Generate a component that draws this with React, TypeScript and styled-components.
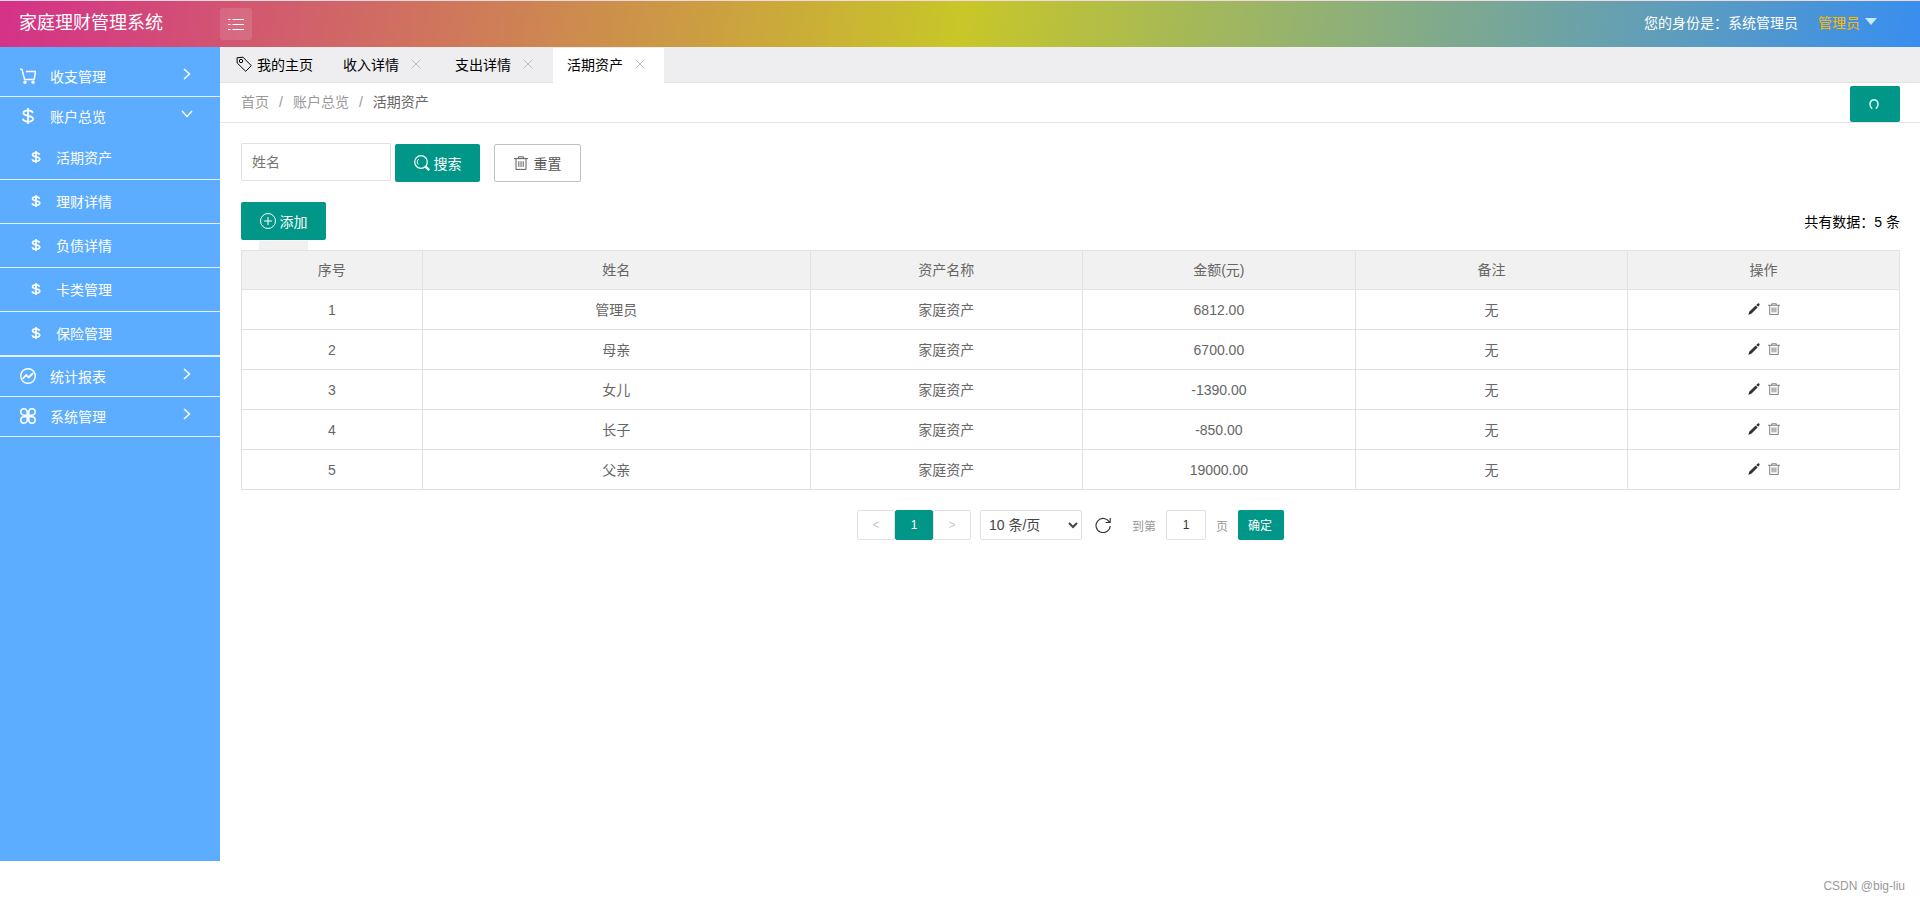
import React, { useState } from "react";
import styled, { createGlobalStyle } from "styled-components";

const GlobalStyle = createGlobalStyle`
  * { box-sizing: border-box; }
  body { margin: 0; background: #fff; }
  body, button, input, select {
    font-family: "Liberation Sans", "Noto Sans CJK SC", sans-serif;
    font-size: 14px;
  }
  a { color: inherit; text-decoration: none; }
  button { cursor: pointer; }
  svg { display: block; flex: none; }
`;

const Page = styled.div`
  min-height: 100vh;
  display: flex;
  flex-direction: column;
`;

const Header = styled.header`
  height: 47px;
  flex: none;
  display: flex;
  align-items: center;
  border-top: 1px solid #f4d9e2;
  background: linear-gradient(100deg, #d53189 0%, #c8c628 50%, #388ef0 100%);
  color: #fff;
`;

const Brand = styled.h1`
  width: 220px;
  margin: 0;
  padding: 0 0 2px 19px;
  font-size: 18px;
  font-weight: 400;
  line-height: 24px;
`;

const CollapseButton = styled.button`
  width: 32px;
  height: 32px;
  padding: 0;
  border: 0;
  border-radius: 3px;
  display: flex;
  align-items: center;
  justify-content: center;
  background: rgba(255, 255, 255, 0.12);
  color: #fff;
`;

const Account = styled.div`
  margin-left: auto;
  padding: 0 43px 2px 0;
  display: flex;
  align-items: center;
  gap: 20px;
  line-height: 20px;
`;

const UserMenu = styled.a`
  display: flex;
  align-items: center;
  gap: 5px;
  color: #ffb800;
`;

const Caret = styled.span`
  border: 6px solid transparent;
  border-top: 7px solid #c4ecfb;
  border-bottom: 0;
  margin-bottom: 4px;
`;

const Body = styled.div`
  flex: 1;
  display: flex;
`;

const Sidebar = styled.nav`
  width: 220px;
  flex: none;
  margin-bottom: 41px;
  padding-top: 10px;
  background: #5cadff;
  color: #fff;
`;

const MenuList = styled.ul`
  margin: 0;
  padding: 0;
  list-style: none;
`;

const MenuGroup = styled.li`
  border-bottom: 1px solid #e3f1ff;
`;

const MenuLink = styled.a`
  height: 39px;
  padding: 0 27px 2px 20px;
  display: flex;
  align-items: center;
  gap: 14px;
`;

const MenuLabel = styled.span`
  flex: 1;
`;

const SubLink = styled.a`
  height: 44px;
  padding: 0 0 2px 30px;
  display: flex;
  align-items: center;
  gap: 14px;
  border-bottom: 1px solid #e3f1ff;
`;

const Main = styled.main`
  flex: 1;
  min-width: 0;
`;

const TabBar = styled.div`
  height: 36px;
  display: flex;
  align-items: flex-end;
  gap: 1px;
  border-bottom: 1px solid #e2e2e2;
  background: #eeeef0;
`;

const Tab = styled.div<{ $active?: boolean; $home?: boolean }>`
  width: ${(p) => (p.$home ? "108px" : "111px")};
  height: ${(p) => (p.$active ? "35px" : "34px")};
  margin-bottom: ${(p) => (p.$active ? "-1px" : "0")};
  padding: ${(p) => (p.$home ? "0 0 2px 16px" : p.$active ? "0 0 3px 14px" : "0 0 2px 14px")};
  display: flex;
  align-items: center;
  gap: ${(p) => (p.$home ? "5px" : "12px")};
  background: ${(p) => (p.$active ? "#fff" : "transparent")};
  color: #000;
  white-space: nowrap;
`;

const TabClose = styled.button`
  padding: 0;
  border: 0;
  background: none;
  color: #c2c2c2;
`;

const CrumbBar = styled.div`
  height: 40px;
  padding: 3px 20px 0 21px;
  display: flex;
  justify-content: space-between;
  border-bottom: 1px solid #e5e5e5;
`;

const Crumbs = styled.div`
  display: flex;
  gap: 10px;
  line-height: 32px;
  color: #999;
`;

const CurrentCrumb = styled.span`
  color: #666;
`;

const Primary = styled.button<{ $size?: "icon" | "small" }>`
  width: ${(p) => (p.$size === "icon" ? "50px" : p.$size === "small" ? "46px" : "85px")};
  height: ${(p) => (p.$size === "icon" ? "36px" : p.$size === "small" ? "30px" : "38px")};
  padding: ${(p) => (p.$size ? "0 2px 1px 0" : "0 0 1px 0")};
  border: 0;
  border-radius: 2px;
  display: flex;
  align-items: center;
  justify-content: center;
  gap: 4px;
  background: #009688;
  color: #fff;
  font-size: ${(p) => (p.$size === "small" ? "12px" : "14px")};
`;

const Reset = styled.button`
  width: 87px;
  height: 38px;
  padding: 0;
  display: flex;
  align-items: center;
  justify-content: center;
  gap: 6px;
  border: 1px solid #c2c2c2;
  border-radius: 2px;
  background: #fff;
  color: #555;
`;

const Content = styled.section`
  padding: 20px 20px 0 21px;
`;

const SearchForm = styled.form`
  display: flex;
  align-items: flex-end;
`;

const NameInput = styled.input`
  width: 150px;
  height: 38px;
  margin: 0 4px 1px 0;
  padding: 0 10px;
  border: 1px solid #e2e2e2;
  border-radius: 2px;
  color: #333;
  &::placeholder { color: #757575; opacity: 1; }
`;

const ResetSlot = styled.div`
  margin-left: 14px;
`;

const Toolbar = styled.div`
  margin-top: 20px;
  display: flex;
  justify-content: space-between;
  align-items: center;
  color: #000;
`;

const Stub = styled.div`
  width: 49px;
  height: 10px;
  margin-left: 18px;
  border-top: 1px solid #fff;
  background: #f1f1f1;
`;

const Table = styled.table`
  width: 100%;
  table-layout: fixed;
  border-collapse: collapse;
  color: #666;
  text-align: center;
  line-height: 20px;
  th, td {
    padding: 0;
    border: 1px solid #e2e2e2;
    font-weight: 400;
  }
  th { height: 39px; background: #f1f1f1; }
  td { height: 40px; }
`;

const Col = styled.col<{ $share: number }>`
  width: ${(p) => p.$share}%;
`;

const Actions = styled.div`
  padding-bottom: 2px;
  display: flex;
  justify-content: center;
  gap: 8px;
`;

const IconButton = styled.button<{ $soft?: boolean }>`
  padding: 0;
  border: 0;
  background: none;
  color: ${(p) => (p.$soft ? "#666" : "#333")};
`;

const Pager = styled.div`
  margin-top: 20px;
  display: flex;
  justify-content: center;
  align-items: center;
  color: #999;
  font-size: 12px;
`;

const PageGroup = styled.div`
  display: flex;
  margin-right: 9px;
`;

const PageButton = styled.button<{ $active?: boolean }>`
  width: 38px;
  height: 30px;
  padding: 0;
  border: 1px solid ${(p) => (p.$active ? "#009688" : "#e2e2e2")};
  border-radius: 2px;
  background: ${(p) => (p.$active ? "#009688" : "#fff")};
  color: ${(p) => (p.$active ? "#fff" : "#c8c8c8")};
  font-size: 12px;
`;

const SizeSelect = styled.select`
  width: 102px;
  height: 30px;
  margin-right: 13px;
  padding: 0 4px;
  border: 1px solid #e2e2e2;
  border-radius: 2px;
  background: #fff;
  color: #444;
`;

const JumpLabel = styled.label`
  margin-left: 21px;
  display: flex;
  align-items: center;
  gap: 10px;
`;

const JumpInput = styled.input`
  width: 40px;
  height: 30px;
  padding: 0 3px;
  border: 1px solid #e2e2e2;
  border-radius: 2px;
  color: #333;
  font-size: 12px;
  text-align: center;
`;

const ConfirmSlot = styled.div`
  margin-left: 10px;
`;

const Footer = styled.footer`
  position: absolute;
  right: 15px;
  bottom: 8px;
  color: #999;
  font-size: 12px;
  line-height: 16px;
`;

type IconProps = { size?: number; width?: number };

const Svg = ({ size = 16, width = 1, children }: IconProps & { children: React.ReactNode }) => (
  <svg width={size} height={size} viewBox="0 0 16 16" fill="none" stroke="currentColor" strokeWidth={width} aria-hidden="true">
    {children}
  </svg>
);

const ListIcon = () => (
  <Svg width={1.2}><path d="M0 3.500h2.500M0 8.500h2.500M0 13.500h2.500M4.500 3.500H16M4.500 8.500H16M4.500 13.500H16" /></Svg>
);
const CartIcon = () => (
  <Svg width={1.5}>
    <path d="M0 1l2 .6L4.600 11.500h9.600L15.500 3.500H6" />
    <circle cx="5" cy="14.200" r="1" fill="currentColor" />
    <circle cx="13" cy="14.200" r="1" fill="currentColor" />
  </Svg>
);
const DollarIcon = ({ size = 16 }: IconProps) => (
  <Svg size={size} width={size < 16 ? 2.2 : 1.8}>
    <path d="M8 0v16M12.700 5C12.300 3.200 10.600 2.400 8 2.400S3.400 3.300 3.400 5.100C3.400 9 13 6.700 13 10.800c0 2-2 2.900-5 2.900s-4.700-1-5-3" />
  </Svg>
);
const ChartIcon = () => (
  <Svg width={1.4}>
    <circle cx="8" cy="8" r="7.300" />
    <path d="M2.500 11l3.700-4 2.500 2.500 4.500-4.500" strokeWidth="1.800" />
  </Svg>
);
const CloverIcon = () => (
  <Svg width={1.5}>
    <path d="M7.200 7.200H4A3.200 3.200 0 1 1 7.200 4zM8.800 7.200V4A3.200 3.200 0 1 1 12 7.200zM7.200 8.800V12A3.200 3.200 0 1 1 4 8.800zM8.800 8.800H12A3.200 3.200 0 1 1 8.800 12z" />
  </Svg>
);
const Chevron = ({ open }: { open?: boolean }) => (
  <svg width="12" height="16" viewBox="0 0 12 16" fill="none" stroke="currentColor" strokeWidth="1.500" aria-hidden="true">
    <path d={open ? "M1 3l5 5.500L11 3" : "M3 1l5.500 5L3 11"} />
  </svg>
);
const TagIcon = () => (
  <Svg>
    <path d="M1 1.800L1.200 7l8.500 8.300 5.600-5.600L7 1.200z" />
    <circle cx="5" cy="5" r="1.700" />
  </Svg>
);
const CloseIcon = () => (
  <Svg size={10} width={1.6}><path d="M1 1l14 14M15 1L1 15" /></Svg>
);
const SearchIcon = () => (
  <Svg width={1.2}>
    <circle cx="7" cy="7" r="6.300" />
    <path d="M4.300 9.500a3.700 3.700 0 0 1 .5-5.500" strokeWidth="1" />
    <path d="M11.600 11.600l3.600 3.500" strokeWidth="2.400" />
  </Svg>
);
const PlusIcon = () => (
  <Svg><circle cx="8" cy="8" r="7.500" /><path d="M8 4v8M4 8h8" /></Svg>
);
const TrashIcon = ({ size = 12 }: IconProps) => (
  <Svg size={size} width={1.1}>
    <path d="M0 3h16M5 2.700V1h6v1.700" />
    <path d="M2.300 3v12.300h11.400V3M5.500 6v6.500M8 6v6.500M10.500 6v6.500" />
  </Svg>
);
const PencilIcon = () => (
  <svg width="12" height="12" viewBox="0 0 12 12" fill="currentColor" aria-hidden="true">
    <path d="M.4 11.700l.8-2.900 6.400-6.300 2 2-6.300 6.200zM8.200 1.900L9.800.5q.7-.5 1.300.1l.4.500q.4.600-.1 1.200L10.100 3.800z" />
  </svg>
);
const RefreshIcon = () => (
  <Svg width={1.100}><path d="M14.300 5A7.100 7.100 0 1 0 15.200 9M15.200 1v4.500h-4.500" /></Svg>
);
const ReloadIcon = () => (
  <svg width="10" height="10" viewBox="0 0 10 10" fill="none" stroke="#c9f5f0" strokeWidth="1.500" aria-hidden="true">
    <path d="M3.400 9.300H2.800C0 6.500.4.800 5 .8s5 5.700 2.200 8.500H6.600" />
  </svg>
);

const accountPages = ["活期资产", "理财详情", "负债详情", "卡类管理", "保险管理"];

const menu = [
  { label: "收支管理", icon: <CartIcon />, pages: [] as string[] },
  { label: "账户总览", icon: <DollarIcon />, pages: accountPages },
  { label: "统计报表", icon: <ChartIcon />, pages: [] },
  { label: "系统管理", icon: <CloverIcon />, pages: [] },
];

const columns = [
  { title: "序号", share: 10.9 },
  { title: "姓名", share: 23.4 },
  { title: "资产名称", share: 16.4 },
  { title: "金额(元)", share: 16.5 },
  { title: "备注", share: 16.4 },
  { title: "操作", share: 16.4 },
];

const assets = [
  { name: "管理员", amount: "6812.00" },
  { name: "母亲", amount: "6700.00" },
  { name: "女儿", amount: "-1390.00" },
  { name: "长子", amount: "-850.00" },
  { name: "父亲", amount: "19000.00" },
];

export default function App() {
  const [name, setName] = useState("");
  const [page, setPage] = useState("1");

  return (
    <Page>
      <GlobalStyle />
      <Header>
        <Brand>家庭理财管理系统</Brand>
        <CollapseButton aria-label="折叠菜单"><ListIcon /></CollapseButton>
        <Account>
          <span>您的身份是：系统管理员</span>
          <UserMenu href="#user">管理员<Caret /></UserMenu>
        </Account>
      </Header>
      <Body>
        <Sidebar>
          <MenuList>
            {menu.map((group) => (
              <MenuGroup key={group.label}>
                <MenuLink href="#menu">
                  {group.icon}
                  <MenuLabel>{group.label}</MenuLabel>
                  <Chevron open={group.pages.length > 0} />
                </MenuLink>
                {group.pages.map((label) => (
                  <SubLink href="#page" key={label}>
                    <DollarIcon size={12} />
                    {label}
                  </SubLink>
                ))}
              </MenuGroup>
            ))}
          </MenuList>
        </Sidebar>
        <Main>
          <TabBar>
            <Tab $home><TagIcon />我的主页</Tab>
            {["收入详情", "支出详情", "活期资产"].map((label) => (
              <Tab key={label} $active={label === "活期资产"}>
                {label}
                <TabClose aria-label={"关闭" + label}><CloseIcon /></TabClose>
              </Tab>
            ))}
          </TabBar>
          <CrumbBar>
            <Crumbs>
              <a href="#home">首页</a>
              <span>/</span>
              <a href="#accounts">账户总览</a>
              <span>/</span>
              <CurrentCrumb>活期资产</CurrentCrumb>
            </Crumbs>
            <Primary $size="icon" aria-label="刷新"><ReloadIcon /></Primary>
          </CrumbBar>
          <Content>
            <SearchForm onSubmit={(e) => e.preventDefault()}>
              <NameInput aria-label="姓名" placeholder="姓名" value={name} onChange={(e) => setName(e.target.value)} />
              <Primary type="submit"><SearchIcon />搜索</Primary>
              <ResetSlot>
                <Reset type="button" onClick={() => setName("")}><TrashIcon size={14} />重置</Reset>
              </ResetSlot>
            </SearchForm>
            <Toolbar>
              <Primary><PlusIcon />添加</Primary>
              <span>共有数据：5 条</span>
            </Toolbar>
            <Stub />
            <Table>
              <colgroup>
                {columns.map((c) => <Col key={c.title} $share={c.share} />)}
              </colgroup>
              <thead>
                <tr>{columns.map((c) => <th key={c.title} scope="col">{c.title}</th>)}</tr>
              </thead>
              <tbody>
                {assets.map((row, i) => (
                  <tr key={row.name}>
                    <td>{i + 1}</td>
                    <td>{row.name}</td>
                    <td>家庭资产</td>
                    <td>{row.amount}</td>
                    <td>无</td>
                    <td>
                      <Actions>
                        <IconButton aria-label={"编辑" + row.name}><PencilIcon /></IconButton>
                        <IconButton $soft aria-label={"删除" + row.name}><TrashIcon /></IconButton>
                      </Actions>
                    </td>
                  </tr>
                ))}
              </tbody>
            </Table>
            <Pager>
              <PageGroup>
                <PageButton aria-label="上一页">&lt;</PageButton>
                <PageButton $active>1</PageButton>
                <PageButton aria-label="下一页">&gt;</PageButton>
              </PageGroup>
              <SizeSelect aria-label="每页条数" defaultValue="10">
                <option value="10">10 条/页</option>
                <option value="20">20 条/页</option>
              </SizeSelect>
              <IconButton aria-label="刷新列表"><RefreshIcon /></IconButton>
              <JumpLabel>
                到第
                <JumpInput value={page} onChange={(e) => setPage(e.target.value)} />
                页
              </JumpLabel>
              <ConfirmSlot><Primary $size="small">确定</Primary></ConfirmSlot>
            </Pager>
          </Content>
        </Main>
      </Body>
      <Footer>CSDN @big-liu</Footer>
    </Page>
  );
}
